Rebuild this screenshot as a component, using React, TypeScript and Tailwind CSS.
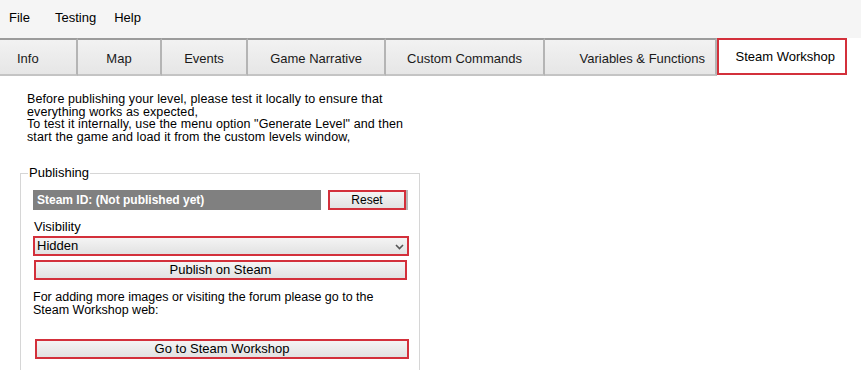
import React from "react";

const menus = [
  { label: "File", cls: "ml-[9px]" },
  { label: "Testing", cls: "ml-[25px]" },
  { label: "Help", cls: "ml-[18px]" },
];

const tabs = [
  { label: "Info", w: "w-[78px]", align: "justify-start pl-[17px]" },
  { label: "Map", w: "w-[84px]", align: "justify-center" },
  { label: "Events", w: "w-[86px]", align: "justify-center" },
  { label: "Game Narrative", w: "w-[138px]", align: "justify-center" },
  { label: "Custom Commands", w: "w-[159px]", align: "justify-center" },
  { label: "Variables & Functions", w: "w-[172px]", align: "justify-end pr-[10px]" },
];

const btn =
  "h-[20px] flex items-center justify-center border-2 border-[#d3303b] bg-gradient-to-b from-[#f4f4f4] to-[#e2e2e2] text-black text-[12px]";

export default function App() {
  return (
    <div
      className="w-[861px] h-[370px] bg-white overflow-hidden text-black"
      style={{ fontFamily: '"Liberation Sans", Arial, sans-serif' }}
    >
      {/* menu bar */}
      <div className="h-[38px] bg-[#f5f5f5] flex items-center text-[13px] pb-[2px]">
        {menus.map((m) => (
          <span key={m.label} className={m.cls}>
            {m.label}
          </span>
        ))}
      </div>

      {/* tabs */}
      <div className="flex h-[38px]">
        {tabs.map((t) => (
          <div
            key={t.label}
            className={`${t.w} ${t.align} flex items-center pt-[3px] border-t-2 border-t-[#9c9c9c] border-r-2 border-r-[#b4b4b4] border-b-2 border-b-[#c4c4c4] bg-gradient-to-b from-[#f2f2f2] to-[#e6e6e6] text-[13px] text-[#1a1a1a]`}
          >
            {t.label}
          </div>
        ))}
        <div className="w-[130px] h-[37px] flex items-center justify-end pr-[10px] border-2 border-[#d3303b] bg-white text-[13px]">
          Steam Workshop
        </div>
      </div>

      {/* content */}
      <div className="pl-[27px] pt-[17px] text-[12.5px] leading-[12.5px] tracking-[0.1px]">
        <p>Before publishing your level, please test it locally to ensure that</p>
        <p>everything works as expected,</p>
        <p>To test it internally, use the menu option "Generate Level" and then</p>
        <p>start the game and load it from the custom levels window,</p>
      </div>

      <fieldset className="ml-[20px] mt-[23px] w-[399px] border border-[#d6d6d6] pl-[12px] pr-[10px] pb-[12px] pt-[10px]">
        <legend className="text-[13px] px-[1px] -ml-[5px] leading-[14px]">Publishing</legend>

        <div className="flex items-center gap-[7px]">
          <div className="w-[288px] h-[20px] bg-[#808080] text-white font-bold text-[12px] flex items-center pl-[4px]">
            Steam ID: (Not published yet)
          </div>
          <div className={`${btn} w-[78px] shadow-[2px_0_0_#b8b8b8]`}>Reset</div>
        </div>

        <div className="mt-[9px] text-[13px] leading-[16px] pl-[1px]">Visibility</div>
        <div className="mt-[1px] w-[376px] h-[20px] flex items-center justify-between border-2 border-[#d3303b] bg-gradient-to-b from-[#f4f4f4] to-[#e2e2e2] pl-[2px] pr-[3px] text-[13px]">
          <span>Hidden</span>
          <svg width="9" height="6" viewBox="0 0 9 6" className="mt-[2px]">
            <path d="M1 1 L4.5 4.5 L8 1" stroke="#555" strokeWidth="1.6" fill="none" />
          </svg>
        </div>
        <div className={`${btn} mt-[4px] w-[373px] ml-[1px] h-[19px] text-[13px]`}>Publish on Steam</div>

        <p className="mt-[11px] text-[12.5px] leading-[12.5px]">
          For adding more images or visiting the forum please go to the
          <br />
          Steam Workshop web:
        </p>

        <div className={`${btn} mt-[23px] ml-[2px] w-[374px] text-[13px]`}>Go to Steam Workshop</div>
      </fieldset>
    </div>
  );
}
